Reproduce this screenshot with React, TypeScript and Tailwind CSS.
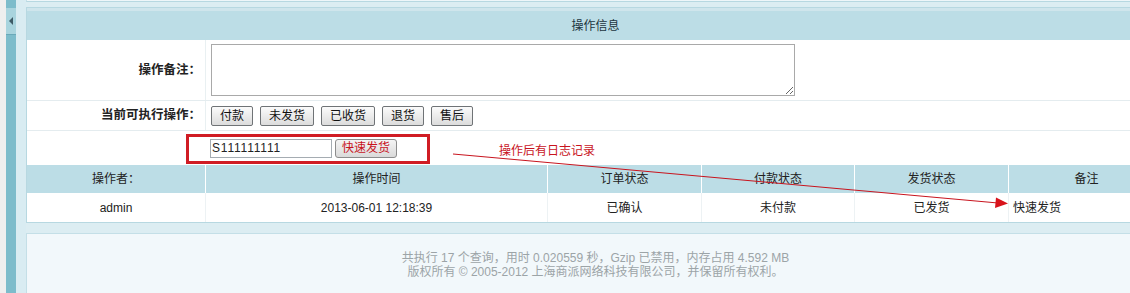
import React from "react";

const font = { fontFamily: '"Liberation Sans", "Noto Sans CJK SC", sans-serif' };

function Btn({ children }: { children: React.ReactNode }) {
  return (
    <button className="h-[20px] px-[8px] border border-[#6f7376] rounded-[2px] bg-[linear-gradient(#fbfbfb,#dcdcdc)] text-[12px] leading-[18px] text-[#111]">
      {children}
    </button>
  );
}

export default function App() {
  const cols = "grid grid-cols-[179px_342px_154px_153px_154px_1fr]";
  return (
    <div className="relative w-[1130px] h-[293px] overflow-hidden bg-[#dcedf2] text-[12px]" style={font}>
      <div className="flex w-[1164px] h-[293px]">
        {/* left strips */}
        <div className="w-[6px] shrink-0 bg-[#efefef]" />
        <div className="w-[10px] shrink-0 bg-[#7dbccb] flex flex-col">
          <div className="mt-[8px] h-[27px] bg-[#a9d4de] border-b border-[#6aa9b9] flex items-center justify-center">
            <div className="w-0 h-0 border-y-[4px] border-y-transparent border-r-[4px] border-r-[#3e5b66]" />
          </div>
        </div>
        <div className="w-[10px] shrink-0 bg-[#d9ecf2]" />

        {/* main column */}
        <div className="flex-1 flex flex-col">
          <div className="h-[2px] bg-[#eef6f9] border-l border-[#c4e0e8] border-b border-b-[#b7d8e1]" />
          <div className="h-[5px]" />
          <div className="border-t border-l border-b border-[#b7d8e1] bg-white">
            <div className="h-[32px] border-t-[3px] border-[#cfe5ec] bg-[#bcdde6] flex items-center justify-center text-[#1d3540]">
              操作信息
            </div>
            <div className="grid grid-cols-[179px_1fr] h-[61px] border-b border-[#e4ecef]">
              <div className="border-r border-[#e9f0f2] flex items-center justify-end pr-[4px] font-bold text-[12.5px] text-[#222]">操作备注：</div>
              <div className="pl-[5px] pt-[4px]">
                <textarea className="block w-[584px] h-[52px] border border-[#a9a9a9] bg-white" />
              </div>
            </div>
            <div className="grid grid-cols-[179px_1fr] h-[30px] border-b border-[#e4ecef]">
              <div className="border-r border-[#e9f0f2] flex items-center justify-end pr-[4px] font-bold text-[12.5px] text-[#222]">当前可执行操作：</div>
              <div className="pl-[5px] flex items-center gap-[7px]">
                <Btn>付款</Btn>
                <Btn>未发货</Btn>
                <Btn>已收货</Btn>
                <Btn>退货</Btn>
                <Btn>售后</Btn>
              </div>
            </div>
            <div className="grid grid-cols-[179px_1fr] h-[34px]">
              <div />
              <div className="pl-[4px] flex items-center gap-[3px]">
                <input
                  defaultValue="S111111111"
                  className="w-[122px] h-[19px] border border-[#a5acb2] px-[1px] text-[12px] tracking-[0.8px] text-[#222] outline-none"
                  style={font}
                />
                <button className="h-[19px] px-[6px] border border-[#8c8c8c] rounded-[3px] bg-[linear-gradient(#f4f4f4,#dadada)] text-[12px] leading-[17px] text-[#c8141e]">
                  快速发货
                </button>
              </div>
            </div>
            <div className={`${cols} h-[28px] bg-[#bcdde6] text-[#222] divide-x divide-white`}>
              <div className="flex items-center justify-center">操作者：</div>
              <div className="flex items-center justify-center">操作时间</div>
              <div className="flex items-center justify-center">订单状态</div>
              <div className="flex items-center justify-center">付款状态</div>
              <div className="flex items-center justify-center">发货状态</div>
              <div className="flex items-center justify-center">备注</div>
            </div>
            <div className={`${cols} h-[29px] text-[#222] divide-x divide-[#edf2f4]`}>
              <div className="flex items-center justify-center">admin</div>
              <div className="flex items-center justify-center">2013-06-01 12:18:39</div>
              <div className="flex items-center justify-center">已确认</div>
              <div className="flex items-center justify-center">未付款</div>
              <div className="flex items-center justify-center">已发货</div>
              <div className="flex items-center pl-[4px]">快速发货</div>
            </div>
          </div>
          <div className="h-[10px]" />
          <div className="flex-1 border-t border-l border-[#c4dfe7] bg-[#f2f8fb] pt-[17px] text-center leading-[14px] text-[#9ca4a7]">
            <div>共执行 17 个查询，用时 0.020559 秒，Gzip 已禁用，内存占用 4.592 MB</div>
            <div>版权所有 © 2005-2012 上海商派网络科技有限公司，并保留所有权利。</div>
          </div>
        </div>
      </div>

      {/* annotations */}
      <div className="absolute left-[186px] top-[134px] w-[244px] h-[30px] border-[3px] border-[#d01c24]" />
      <div className="absolute left-[499px] top-[144px] text-[12px] leading-[14px] text-[#c8141e]">操作后有日志记录</div>
      <svg className="absolute left-0 top-0" width="1130" height="293" viewBox="0 0 1130 293">
        <line x1="453" y1="154" x2="998" y2="203" stroke="#c8141e" strokeWidth="1" />
        <polygon points="1008,203.5 996,197.5 995,208" fill="#d8131b" />
      </svg>
    </div>
  );
}
